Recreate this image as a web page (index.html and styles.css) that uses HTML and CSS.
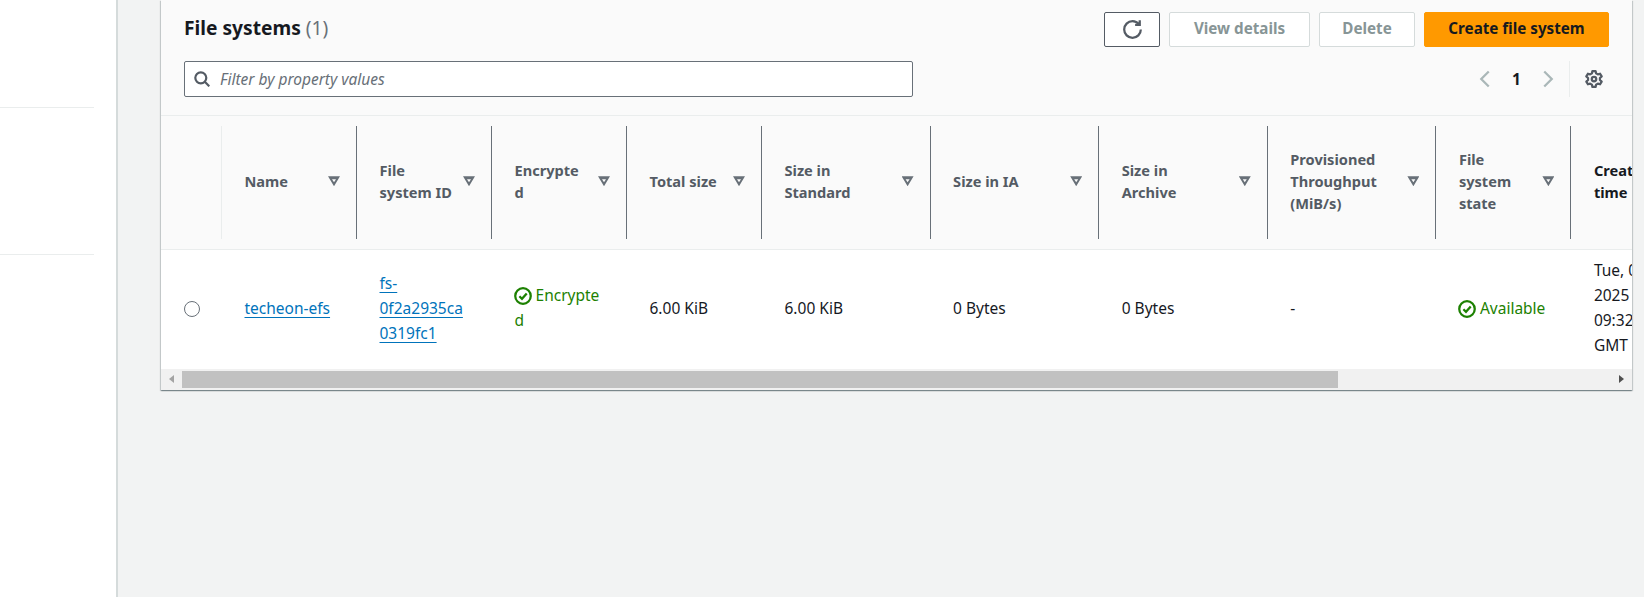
FILE: index.html
```html
<!DOCTYPE html>
<html>
<head>
  <meta charset="UTF-8">
  <title>File systems</title>
  <link rel="stylesheet" href="styles.css">
</head>
<body>
  <aside class="sidebar">
    <div class="side-group first"></div>
    <div class="side-group"></div>
    <div class="side-group"></div>
  </aside>
  <main class="content">
    <section class="card">
      <div class="card-head">
        <div class="head-row">
          <h2 class="title">File systems <span class="count">(1)</span></h2>
          <div class="actions">
            <button class="btn btn-icon">
              <svg width="19" height="19" viewBox="0 0 16 16" fill="none" stroke="#545b64" stroke-width="1.9">
                <path d="M15 8c0 3.870-3.130 7-7 7s-7-3.130-7-7 3.130-7 7-7c2.220 0 4.200 1.030 5.480 2.640"/>
                <path d="M14.100 .3v3.900h-3.900"/>
              </svg>
            </button>
            <button class="btn btn-off btn-view">View details</button>
            <button class="btn btn-off btn-delete">Delete</button>
            <button class="btn btn-primary">Create file system</button>
          </div>
        </div>
        <div class="head-row filter-row">
          <div class="filter">
            <svg width="16" height="16" viewBox="0 0 16 16" fill="none" stroke="#545b64" stroke-width="2.200">
              <circle cx="6.800" cy="6.800" r="5.500"/>
              <path d="M10.800 10.800l4.500 4.500"/>
            </svg>
            <span class="placeholder">Filter by property values</span>
          </div>
          <div class="pager">
            <svg width="20" height="20" viewBox="0 0 16 16" fill="none" stroke="#aab7b8" stroke-width="1.800"><path d="M11 2L5 8l6 6"/></svg>
            <span class="pg-num">1</span>
            <svg width="20" height="20" viewBox="0 0 16 16" fill="none" stroke="#aab7b8" stroke-width="1.800"><path d="M5 2l6 6-6 6"/></svg>
            <div class="pg-gear">
              <svg width="18" height="18" viewBox="0 0 16 16" fill="none" stroke="#545b64" stroke-width="2" stroke-linejoin="round">
                <circle cx="8" cy="8" r="2"/>
                <path d="M6.600 1h2.800l.5 2 1.500.9 2-.6 1.400 2.400-1.500 1.400v1.800l1.500 1.400-1.400 2.400-2-.6-1.500.9-.5 2H6.600l-.5-2-1.500-.9-2 .6-1.400-2.400 1.500-1.400V7.100L1.200 5.700l1.400-2.400 2 .6 1.500-.9z"/>
              </svg>
            </div>
          </div>
        </div>
      </div>

      <div class="table-wrap">
        <table class="table">
          <colgroup>
            <col class="c-radio"><col class="c-s"><col class="c-s"><col class="c-s"><col class="c-s">
            <col class="c-l"><col class="c-l"><col class="c-l"><col class="c-l"><col class="c-s"><col class="c-s">
          </colgroup>
          <thead>
            <tr>
              <th><div class="th-in th-first"></div></th>
              <th><div class="th-in"><span>Name</span><i class="caret"></i></div></th>
              <th><div class="th-in"><span>File<br>system ID</span><i class="caret"></i></div></th>
              <th><div class="th-in"><span>Encrypte<br>d</span><i class="caret"></i></div></th>
              <th><div class="th-in"><span>Total size</span><i class="caret"></i></div></th>
              <th><div class="th-in"><span>Size in<br>Standard</span><i class="caret"></i></div></th>
              <th><div class="th-in"><span>Size in IA</span><i class="caret"></i></div></th>
              <th><div class="th-in"><span>Size in<br>Archive</span><i class="caret"></i></div></th>
              <th><div class="th-in"><span>Provisioned<br>Throughput<br>(MiB/s)</span><i class="caret"></i></div></th>
              <th><div class="th-in"><span>File<br>system<br>state</span><i class="caret"></i></div></th>
              <th><div class="th-in th-sorted"><span>Creation<br>time</span></div></th>
            </tr>
          </thead>
          <tbody>
            <tr>
              <td class="td-radio"><span class="radio"></span></td>
              <td><a class="link" href="#">techeon-efs</a></td>
              <td><a class="link" href="#">fs-<br>0f2a2935ca<br>0319fc1</a></td>
              <td class="ok">
                <svg class="ok-icon" width="18" height="18" viewBox="0 0 16 16" fill="none" stroke="#1d8102" stroke-width="2"><circle cx="8" cy="8" r="6.900"/><path d="M4.800 8.200l2.300 2.300 4.200-4.700"/></svg>
                Encrypte<br>d
              </td>
              <td>6.00 KiB</td>
              <td>6.00 KiB</td>
              <td>0 Bytes</td>
              <td>0 Bytes</td>
              <td>-</td>
              <td class="ok">
                <svg class="ok-icon" width="18" height="18" viewBox="0 0 16 16" fill="none" stroke="#1d8102" stroke-width="2"><circle cx="8" cy="8" r="6.900"/><path d="M4.800 8.200l2.300 2.300 4.200-4.700"/></svg>
                Available
              </td>
              <td>Tue, 07 Jan<br>2025<br>09:32:14<br>GMT</td>
            </tr>
          </tbody>
        </table>
      </div>

      <div class="hscroll">
        <i class="sb-arrow sb-left"></i>
        <div class="sb-track"><div class="sb-thumb"></div></div>
        <i class="sb-arrow sb-right"></i>
      </div>
    </section>
  </main>
</body>
</html>
```

FILE: styles.css
```css
* {
  box-sizing: border-box;
}
html,
body {
  height: 100%;
}
body {
  margin: 0;
  display: flex;
  overflow: hidden;
  background: #f2f3f3;
  color: #16191f;
  font-family: "Noto Sans", sans-serif;
  font-size: 15.500px;
  line-height: 22px;
}

.sidebar {
  width: 118px;
  flex: none;
  background: #fff;
  border-right: 2px solid #d5dbdb;
  padding-right: 22px;
}
.side-group {
  height: 147px;
  border-bottom: 1px solid #eaeded;
}
.side-group.first {
  height: 108px;
}
.side-group:last-child {
  border-bottom: 0;
}

.content {
  flex: 1;
  min-width: 0;
  padding: 0 12px 0 43px;
}
.card {
  background: #fff;
  box-shadow: 0 1px 1px 0 rgba(0,28,36,.3), 1px 1px 1px 0 rgba(0,28,36,.15), -1px 1px 1px 0 rgba(0,28,36,.15);
}

.card-head {
  height: 116px;
  padding: 12px 23px 0 23px;
  background: #fafafa;
  border-bottom: 1px solid #eaeded;
}
.head-row {
  display: flex;
  align-items: center;
  justify-content: space-between;
}
.filter-row {
  margin-top: 14px;
}
.title {
  margin: 0 0 3px;
  font-size: 19.200px;
  font-weight: 700;
  line-height: 26px;
}
.count {
  font-weight: 400;
  color: #687078;
}

.actions {
  display: flex;
  gap: 9px;
}
.btn {
  height: 35px;
  border: 1px solid #d5dbdb;
  border-radius: 2px;
  background: #fff;
  font: 700 15.200px/20px "Noto Sans", sans-serif;
  padding: 0 0 3px;
}
.btn-icon {
  width: 56px;
  padding: 0;
  border-color: #545b64;
  display: flex;
  align-items: center;
  justify-content: center;
}
.btn-off {
  color: #879596;
}
.btn-view {
  width: 141px;
}
.btn-delete {
  width: 96px;
}
.btn-primary {
  width: 185px;
  background: #f90;
  border-color: #f90;
  color: #16191f;
}

.filter {
  width: 729px;
  height: 36px;
  display: flex;
  align-items: center;
  gap: 10px;
  padding-left: 9px;
  background: #fff;
  border: 1px solid #687078;
  border-radius: 2px;
}
.placeholder {
  font-style: italic;
  color: #687078;
}

.pager {
  display: flex;
  align-items: center;
  height: 36px;
  padding-right: 6px;
}
.pg-num {
  width: 43px;
  text-align: center;
  font-weight: 700;
}
.pg-gear {
  height: 36px;
  margin-left: 11px;
  padding-left: 15px;
  border-left: 1px solid #eaeded;
  display: flex;
  align-items: center;
}

.table-wrap {
  overflow: hidden;
}
.table {
  width: 1545.400px;
  table-layout: fixed;
  border-collapse: collapse;
}
.c-radio {
  width: 61px;
}
.c-s {
  width: 135px;
}
.c-l {
  width: 168.600px;
}

thead th {
  height: 133px;
  padding: 0;
  background: #fafafa;
  border-bottom: 1px solid #eaeded;
  text-align: left;
  font-size: 14.600px;
  font-weight: 700;
  color: #545b64;
}
.th-in {
  height: 113px;
  display: flex;
  align-items: center;
  justify-content: space-between;
  padding: 0 16px 2px 22.500px;
  border-right: 1px solid #687078;
}
.th-first {
  border-right-color: #eaeded;
}
.th-sorted {
  border-right: 0;
  color: #16191f;
}
.caret {
  flex: none;
  width: 12px;
  height: 10px;
  margin-left: 8px;
  background: #687078;
  clip-path: polygon(0 0, 100% 0, 50% 100%, 0 0, 4px 3px, 50% calc(100% - 4px), calc(100% - 4px) 3px, 4px 3px);
}

tbody td {
  height: 120px;
  padding: 0 10px 2px 22.500px;
  line-height: 25px;
  vertical-align: middle;
}
.td-radio {
  padding: 0 0 0 23px;
}
.radio {
  display: block;
  width: 16px;
  height: 16px;
  border: 1px solid #687078;
  border-radius: 50%;
}
.link {
  color: #0073bb;
  text-decoration: underline;
  text-underline-offset: 3px;
  text-decoration-thickness: 1px;
}
.ok {
  color: #1d8102;
}
.ok-icon {
  vertical-align: -4px;
  margin-left: -1px;
}

.hscroll {
  height: 21px;
  display: flex;
  align-items: stretch;
  background: #f1f1f1;
}
.sb-arrow {
  flex: none;
  width: 21px;
  position: relative;
}
.sb-arrow::after {
  content: "";
  position: absolute;
  top: 6px;
  border: 4px solid transparent;
  border-top-width: 4.500px;
  border-bottom-width: 4.500px;
}
.sb-left::after {
  left: 8px;
  border-right: 5px solid #a3a3a3;
  border-left-width: 0;
}
.sb-right::after {
  right: 8px;
  border-left: 5px solid #505050;
  border-right-width: 0;
}
.sb-track {
  flex: 1;
  padding: 2px 0;
}
.sb-thumb {
  width: 1156px;
  height: 17px;
  background: #c1c1c1;
}
```
